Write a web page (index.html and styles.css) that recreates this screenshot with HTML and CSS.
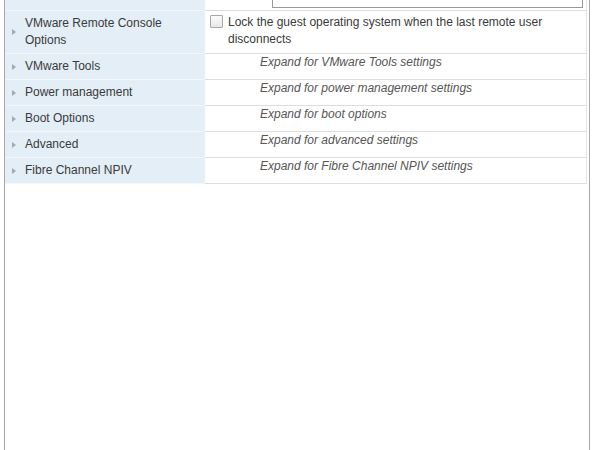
FILE: index.html
```html
<!DOCTYPE html>
<html>
<head>
<meta charset="utf-8">
<link rel="stylesheet" href="styles.css">
</head>
<body>
<div class="frame">
  <div class="grid">
    <div class="row top">
      <div class="lab"></div>
      <div class="val"><div class="inputbox"></div></div>
    </div>
    <div class="row tall">
      <div class="lab"><span class="tri"></span><span class="txt">VMware Remote Console Options</span></div>
      <div class="val chk"><span class="box"></span><span class="chklabel">Lock the guest operating system when the last remote user disconnects</span></div>
    </div>
    <div class="row">
      <div class="lab"><span class="tri"></span><span class="txt">VMware Tools</span></div>
      <div class="val"><span class="hint">Expand for VMware Tools settings</span></div>
    </div>
    <div class="row">
      <div class="lab"><span class="tri"></span><span class="txt">Power management</span></div>
      <div class="val"><span class="hint">Expand for power management settings</span></div>
    </div>
    <div class="row">
      <div class="lab"><span class="tri"></span><span class="txt">Boot Options</span></div>
      <div class="val"><span class="hint">Expand for boot options</span></div>
    </div>
    <div class="row">
      <div class="lab"><span class="tri"></span><span class="txt">Advanced</span></div>
      <div class="val"><span class="hint">Expand for advanced settings</span></div>
    </div>
    <div class="row">
      <div class="lab"><span class="tri"></span><span class="txt">Fibre Channel NPIV</span></div>
      <div class="val"><span class="hint">Expand for Fibre Channel NPIV settings</span></div>
    </div>
  </div>
</div>
</body>
</html>
```
FILE: styles.css
```css
html, body {
  margin: 0;
  padding: 0;
  background: #ffffff;
}
body {
  font-family: "Liberation Sans", Arial, sans-serif;
  font-size: 12px;
  color: #3a3a3a;
}
.frame {
  margin-left: 4px;
  width: 586px;
  height: 450px;
  border-left: 1px solid #a8a8a8;
  border-right: 1px solid #a8a8a8;
  box-sizing: border-box;
}
.grid {
  display: flex;
  flex-direction: column;
  margin-right: 2px;
  border-right: 1px solid #e4e4e4;
}
.row {
  display: flex;
  height: 25px;
  border-bottom: 1px solid #dddddd;
}
.row .lab {
  width: 200px;
  flex: none;
  background: #e3eef6;
  display: flex;
  align-items: center;
  padding-left: 7px;
  box-sizing: border-box;
  border-bottom: 1px solid #f2f6fa;
  margin-bottom: -1px;
}
.row.top {
  height: 10px;
}
.row.tall {
  height: 42px;
}
.tri {
  width: 0;
  height: 0;
  border-top: 3.5px solid transparent;
  border-bottom: 3.5px solid transparent;
  border-left: 4px solid #a9a9a9;
  margin-right: 9px;
  flex: none;
}
.txt {
  line-height: 17px;
}
.val {
  flex: 1;
  position: relative;
}
.inputbox {
  margin-left: 67px;
  margin-right: 3px;
  height: 7px;
  border: 1px solid #999999;
  border-top: none;
}
.hint {
  display: block;
  padding-left: 55px;
  padding-top: 0;
  font-style: italic;
  color: #555555;
  line-height: 16px;
}
.chk {
  display: flex;
  align-items: flex-start;
  padding-left: 5px;
  padding-top: 4px;
  box-sizing: border-box;
}
.box {
  width: 11px;
  height: 11px;
  border: 1px solid #a8a8a8;
  border-radius: 1px;
  background: linear-gradient(#fafafa, #e8e8e8);
  flex: none;
  margin-top: 0;
  margin-right: 5px;
}
.chklabel {
  line-height: 17px;
  margin-top: -1px;
  width: 340px;
}
```
